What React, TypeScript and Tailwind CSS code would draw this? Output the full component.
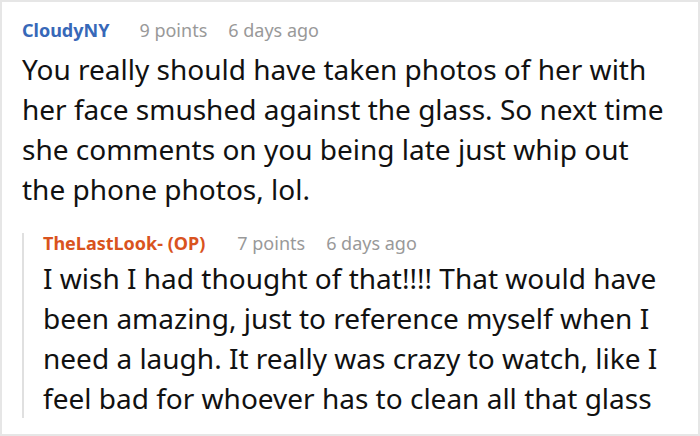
export default function App() {
  return (
    <div className="w-[700px] h-[436px] bg-white border-2 border-[#e6e6e6] overflow-hidden font-['Noto_Sans',sans-serif]">
      <div className="h-[416px] overflow-hidden pl-[20px] pr-[20px] pt-[18px]">
        {/* Comment */}
        <div className="flex items-center h-[20px] text-[18px] leading-[20px]">
          <span className="font-bold text-[#3768b8]">CloudyNY</span>
          <span className="ml-[30px] text-[#999]">9 points</span>
          <span className="ml-[21px] text-[#999]">6 days ago</span>
        </div>
        <p className="mt-[9px] text-[28px] leading-[40px] text-[#111]">
          You really should have taken photos of her with her face smushed against the glass. So next time she
          comments on you being late just whip out the phone photos, lol.
        </p>

        {/* Reply */}
        <div className="mt-[32px] border-l-2 border-[#e0e0e0] pl-[19px]">
          <div className="-mt-[8px] flex items-center h-[20px] text-[18px] leading-[20px]">
            <span className="font-bold text-[#d9531e]">TheLastLook- (OP)</span>
            <span className="ml-[32px] text-[#999]">7 points</span>
            <span className="ml-[21px] text-[#999]">6 days ago</span>
          </div>
          <p className="mt-[5px] text-[28px] leading-[40px] text-[#111]">
            I wish I had thought of that!!!! That would have been amazing, just to reference myself when I need a
            laugh. It really was crazy to watch, like I feel bad for whoever has to clean all that glass up after
            that.
          </p>
        </div>
      </div>
    </div>
  );
}
